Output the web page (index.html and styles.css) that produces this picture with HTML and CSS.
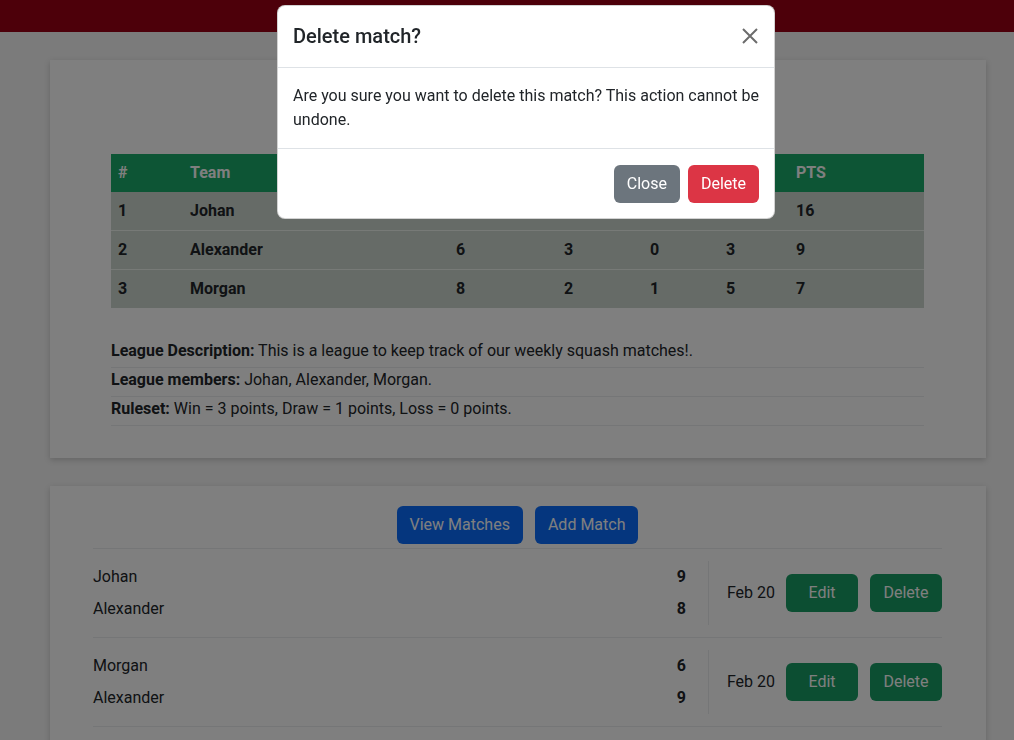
FILE: index.html
```html
<!DOCTYPE html>
<html lang="en">
<head>
<meta charset="utf-8">
<title>League</title>
<link rel="stylesheet" href="styles.css">
</head>
<body>
<nav class="navbar"></nav>
<main class="main">
  <section class="card card-league">
    <table class="standings">
      <colgroup>
        <col class="c-rank"><col class="c-team"><col class="c-mp"><col class="c-w"><col class="c-d"><col class="c-l"><col class="c-pts">
      </colgroup>
      <thead>
        <tr><th>#</th><th>Team</th><th>MP</th><th>W</th><th>D</th><th>L</th><th>PTS</th></tr>
      </thead>
      <tbody>
        <tr><td>1</td><td>Johan</td><td>8</td><td>5</td><td>1</td><td>2</td><td>16</td></tr>
        <tr><td>2</td><td>Alexander</td><td>6</td><td>3</td><td>0</td><td>3</td><td>9</td></tr>
        <tr><td>3</td><td>Morgan</td><td>8</td><td>2</td><td>1</td><td>5</td><td>7</td></tr>
      </tbody>
    </table>
    <ul class="info">
      <li><b>League Description:</b> This is a league to keep track of our weekly squash matches!.</li>
      <li><b>League members:</b> Johan, Alexander, Morgan.</li>
      <li><b>Ruleset:</b> Win = 3 points, Draw = 1 points, Loss = 0 points.</li>
    </ul>
  </section>

  <section class="card card-matches">
    <div class="match-actions">
      <button class="btn btn-primary">View Matches</button>
      <button class="btn btn-primary">Add Match</button>
    </div>
    <div class="match">
      <div class="match-teams">
        <div class="team"><span>Johan</span><b>9</b></div>
        <div class="team"><span>Alexander</span><b>8</b></div>
      </div>
      <div class="match-meta">
        <span class="date">Feb 20</span>
        <button class="btn btn-success btn-fixed">Edit</button>
        <button class="btn btn-success btn-fixed">Delete</button>
      </div>
    </div>
    <div class="match">
      <div class="match-teams">
        <div class="team"><span>Morgan</span><b>6</b></div>
        <div class="team"><span>Alexander</span><b>9</b></div>
      </div>
      <div class="match-meta">
        <span class="date">Feb 20</span>
        <button class="btn btn-success btn-fixed">Edit</button>
        <button class="btn btn-success btn-fixed">Delete</button>
      </div>
    </div>
  </section>
</main>

<div class="backdrop"></div>
<div class="modal" role="dialog">
  <div class="modal-header">
    <h5 class="modal-title">Delete match?</h5>
    <button class="btn-close" aria-label="Close">
      <svg width="16" height="16" viewBox="0 0 16 16"><path d="M1 1L15 15M15 1L1 15" stroke="#6c6c6c" stroke-width="2" fill="none"/></svg>
    </button>
  </div>
  <div class="modal-body">Are you sure you want to delete this match? This action cannot be undone.</div>
  <div class="modal-footer">
    <button class="btn btn-secondary">Close</button>
    <button class="btn btn-danger">Delete</button>
  </div>
</div>
</body>
</html>
```

FILE: styles.css
```css
* { box-sizing: border-box; }
html, body { overflow: hidden; }
body {
  margin: 0;
  font-family: Roboto, "Liberation Sans", sans-serif;
  font-size: 16px;
  line-height: 1.5;
  color: #212529;
  background: #f6f6f6;
}
.navbar { height: 32px; background: #9a0014; }
.main {
  display: flex;
  flex-direction: column;
  gap: 28px;
  padding: 28px 28px 0 50px;
}
.card {
  background: #fff;
  box-shadow: 0 2px 6px rgba(0, 0, 0, 0.18);
}
.card-league { padding: 94px 62px 32px 61px; }
.standings {
  width: 100%;
  table-layout: fixed;
  border-collapse: collapse;
  font-weight: 700;
}
.c-rank { width: 72px; }
.c-team { width: 266px; }
.c-mp { width: 108px; }
.c-w { width: 86px; }
.c-d { width: 76px; }
.c-l { width: 70px; }
.standings th, .standings td {
  text-align: left;
  padding: 7px 7px;
  line-height: 24px;
}
.standings thead th { background: #1aaa6a; color: #fff; }
.standings tbody td { background: #cdd7ce; }
.standings tbody tr:not(:last-child) td { border-bottom: 1px solid #eef4ee; }
.info {
  list-style: none;
  margin: 31px 0 0;
  padding: 0;
}
.info li {
  padding: 0 0 4px;
  border-bottom: 1px solid #ebedef;
}
.info li b { font-weight: 700; }

.card-matches { padding: 20px 44px 40px 43px; }
.match-actions {
  display: flex;
  justify-content: center;
  gap: 12px;
  margin-bottom: 4px;
}
.btn {
  font-family: inherit;
  font-size: 16px;
  line-height: 24px;
  padding: 6px 12px;
  border: 1px solid transparent;
  border-radius: 6px;
  color: #fff;
  cursor: pointer;
}
.btn-primary { background: #0a6dfd; }
.btn-success { background: #189c64; }
.btn-secondary { background: #6c757d; }
.btn-danger { background: #dc3545; }
.btn-fixed { width: 72px; padding-left: 0; padding-right: 0; text-align: center; }
.match {
  display: flex;
  align-items: center;
  border-top: 1px solid #ebedef;
  padding: 12px 0 12px;
}
.match:last-child { border-bottom: 1px solid #ebedef; }
.match-teams {
  flex: 1;
  display: flex;
  flex-direction: column;
  gap: 8px;
  padding: 4px 22px 4px 0;
  border-right: 1px solid #ebedef;
}
.team { display: flex; justify-content: space-between; }
.team b { font-weight: 700; }
.match-meta {
  display: flex;
  align-items: center;
  padding-left: 18px;
}
.date { margin-right: 11px; }
.match-meta .btn + .btn { margin-left: 12px; }

.backdrop {
  position: fixed;
  inset: 0;
  background: rgba(0, 0, 0, 0.5);
}
.modal {
  position: fixed;
  top: 5px;
  left: 277px;
  width: 498px;
  background: #fff;
  border-radius: 8px;
  border: 1px solid rgba(0, 0, 0, 0.175);
  overflow: hidden;
}
.modal-header {
  display: flex;
  align-items: center;
  justify-content: space-between;
  padding: 15px 15px 16px;
  border-bottom: 1px solid #dee2e6;
}
.modal-title {
  margin: 0;
  font-size: 20px;
  font-weight: 500;
  line-height: 30px;
}
.btn-close {
  background: none;
  border: 0;
  padding: 0;
  width: 16px;
  height: 16px;
  margin-right: 1px;
  display: flex;
}
.modal-body {
  padding: 16px 15px;
  border-bottom: 1px solid #dee2e6;
}
.modal-footer {
  display: flex;
  justify-content: flex-end;
  gap: 8px;
  padding: 16px 15px 15px;
}
```
